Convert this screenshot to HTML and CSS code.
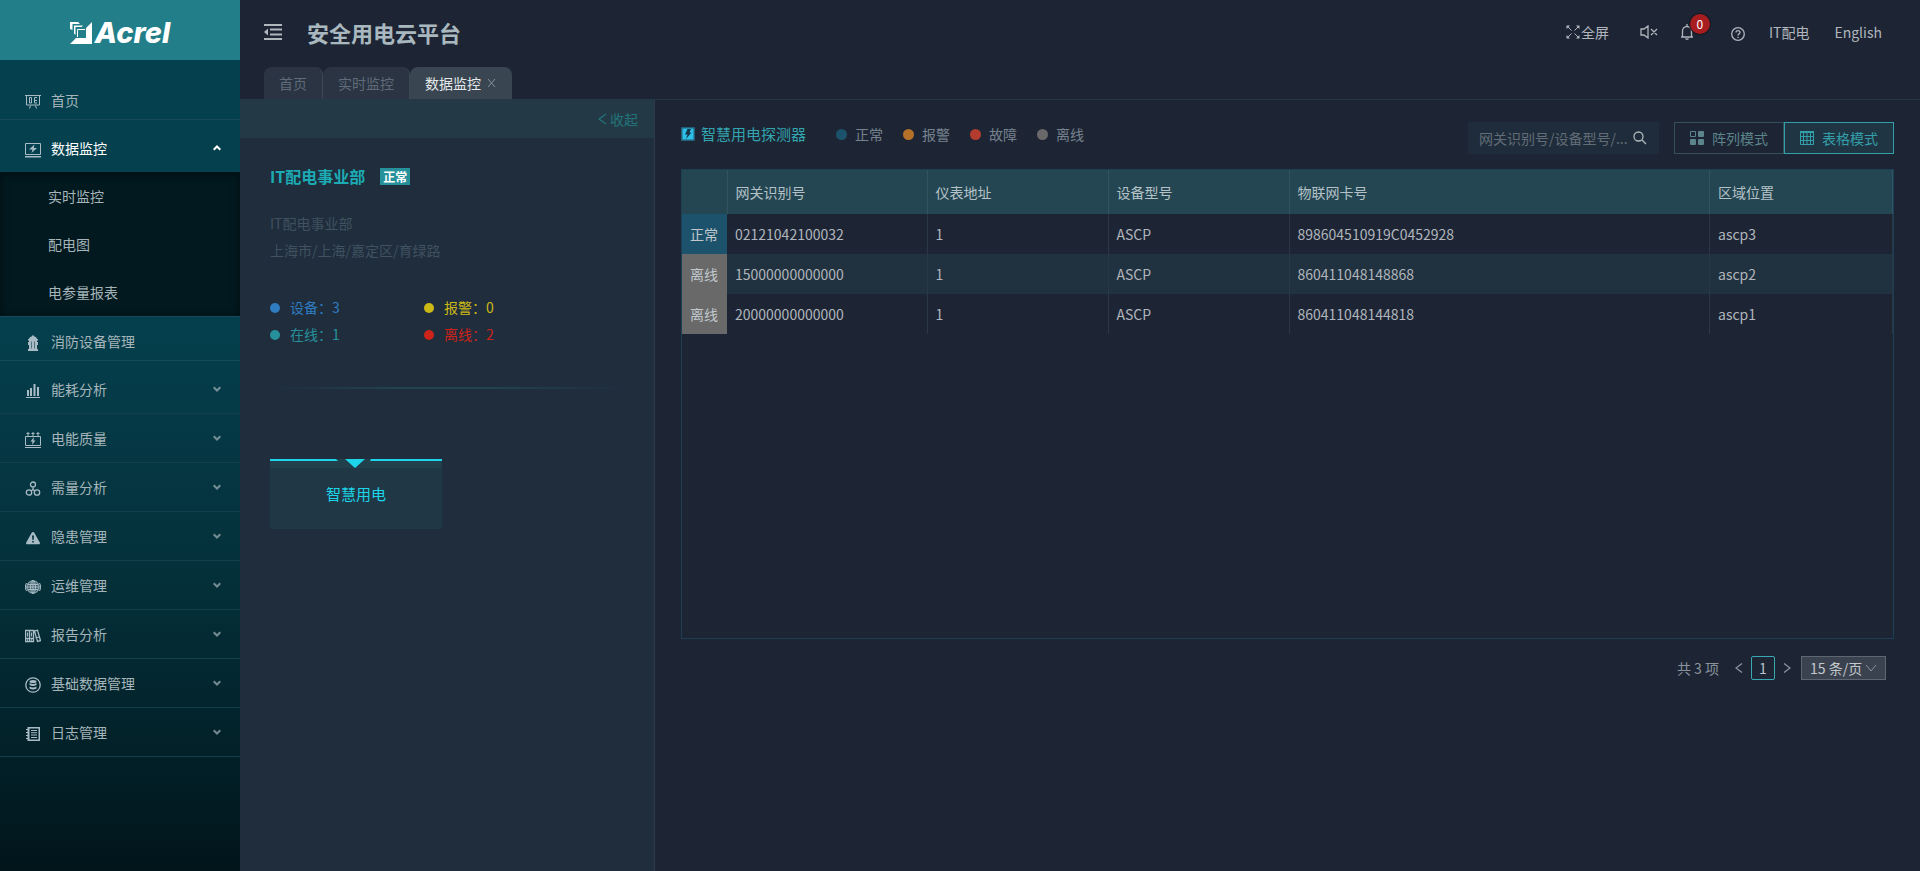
FILE: index.html
```html
<!DOCTYPE html>
<html lang="zh-CN">
<head>
  <meta charset="UTF-8">
  <meta name="viewport" content="width=device-width, initial-scale=1.0">
  <title>安全用电云平台</title>
  <link rel="stylesheet" href="styles.css">
</head>
<body>
  <aside class="sidebar">
    <div class="logo">
      <svg class="logo-mark" viewBox="0 0 22 22" width="22" height="22">
        <path d="M0 0h8l2 2H2.500v6L0 7z"/>
        <path d="M4 3.500h9L11.500 5H5.500v8L4 11.500z"/>
        <path d="M22 0v22H0l6-6h10V6z"/>
        <path class="line" d="M7.500 15V7.500H15"/>
      </svg>
      <span class="logo-text">Acrel</span>
    </div>

    <ul class="menu">
      <li>
        <a href="#" class="menu-item">
          <svg class="icon" viewBox="0 0 16 16"><path class="line" d="M0 1.500h16M1.500 1.500v9.500h13v-9.500M4.500 3.500h2v5.500h-2zM12 3.500H9.500v5.500H12M9.500 6.500H12M5.500 11.500l-1 3M10.500 11.500l1 3"/></svg>
          <span>首页</span>
        </a>
      </li>
      <li>
        <button class="menu-title open">
          <svg class="icon" viewBox="0 0 16 16"><path class="line" d="M.5 1.500h15v11H.5z"/><path d="M9.500 2.500L4 7.500h3.500L6.500 11 12 6H8.800zM0 14h16v1.500H0z"/></svg>
          <span>数据监控</span>
          <svg class="arrow" viewBox="0 0 8 6"><path d="M.7 4.700L4 1.500l3.300 3.200"/></svg>
        </button>
        <ul class="submenu">
          <li><a href="#">实时监控</a></li>
          <li><a href="#">配电图</a></li>
          <li><a href="#">电参量报表</a></li>
        </ul>
      </li>
      <li>
        <a href="#" class="menu-item">
          <svg class="icon" viewBox="0 0 16 16"><path d="M8 0l1.500 1.500C11 2 12 3 12 4h1v1.500h-1V7h1v3h-1v4h1v2H3v-2h1v-4H3V7h1V5.500H3V4h1c0-1 1-2 2.500-2.500z"/><path class="dark" d="M6.500 6.500v7M9.500 6.500v7"/></svg>
          <span>消防设备管理</span>
        </a>
      </li>
      <li>
        <button class="menu-title">
          <svg class="icon" viewBox="0 0 16 16"><path d="M1 14h14v1H1zM2 7h2v6H2zM5 5h2v8H5zM8.500 1h2v12h-2zM12 4h2v9h-2z"/></svg>
          <span>能耗分析</span>
          <svg class="arrow" viewBox="0 0 8 6"><path d="M.7 1.300L4 4.500l3.300-3.200"/></svg>
        </button>
      </li>
      <li>
        <button class="menu-title">
          <svg class="icon" viewBox="0 0 16 16"><path class="line" d="M.5 4.500h15v9H.5zM3 0v4M8 0v4M13 0v4M0 15.500h16"/><path d="M1.500 1h3v1h-3zM6.500 1h3v1h-3zM11.500 1h3v1h-3zM9 5L5.500 9.500h2L7 13l3.500-4.500h-2z"/></svg>
          <span>电能质量</span>
          <svg class="arrow" viewBox="0 0 8 6"><path d="M.7 1.300L4 4.500l3.300-3.200"/></svg>
        </button>
      </li>
      <li>
        <button class="menu-title">
          <svg class="icon" viewBox="0 0 16 16"><g class="line bold"><circle cx="8" cy="3.500" r="2.500"/><circle cx="4" cy="11.500" r="2.700"/><circle cx="12" cy="11.500" r="2.700"/><path d="M8 6.500v2L6 10M8 8.500l2 1.500"/></g></svg>
          <span>需量分析</span>
          <svg class="arrow" viewBox="0 0 8 6"><path d="M.7 1.300L4 4.500l3.300-3.200"/></svg>
        </button>
      </li>
      <li>
        <button class="menu-title">
          <svg class="icon" viewBox="0 0 16 16"><path fill-rule="evenodd" d="M8 2c.6 0 1 .3 1.300.8l5.500 9.700c.5 1-.1 1.800-1 1.800H2.200c-.9 0-1.500-.8-1-1.800l5.500-9.700C7 2.300 7.400 2 8 2zM7 5.500l.4 4.500h1.200L9 5.500zM7.200 11v1.500h1.600V11z"/></svg>
          <span>隐患管理</span>
          <svg class="arrow" viewBox="0 0 8 6"><path d="M.7 1.300L4 4.500l3.300-3.200"/></svg>
        </button>
      </li>
      <li>
        <button class="menu-title">
          <svg class="icon" viewBox="0 0 16 16"><circle cx="8" cy="8" r="6.500" opacity=".35"/><g class="line"><circle cx="8" cy="8" r="6.200"/><ellipse cx="8" cy="8" rx="2.500" ry="6.200"/><path d="M8 1v14M3 5.500h10M2 8h12M3 10.500h10M1.500 4C0 6.500 0 9.500 1.500 12M14.500 4c1.500 2.500 1.500 5.500 0 8"/></g></svg>
          <span>运维管理</span>
          <svg class="arrow" viewBox="0 0 8 6"><path d="M.7 1.300L4 4.500l3.300-3.200"/></svg>
        </button>
      </li>
      <li>
        <button class="menu-title">
          <svg class="icon" viewBox="0 0 16 16"><g class="line bold"><path d="M.5 2.500h4v11h-4zM4.500 2.500h4v11h-4zM9.500 3l3-.8 3 10.500-3 .8zM.5 10.500h8M10.500 10l3.500-1"/><path d="M2.500 4.500v4M6.500 4.500v4M2 12h1M6 12h1"/></g></svg>
          <span>报告分析</span>
          <svg class="arrow" viewBox="0 0 8 6"><path d="M.7 1.300L4 4.500l3.300-3.200"/></svg>
        </button>
      </li>
      <li>
        <button class="menu-title">
          <svg class="icon" viewBox="0 0 16 16"><circle class="line bold" cx="8" cy="8" r="7.200"/><ellipse cx="8" cy="4.500" rx="3.500" ry="1.500"/><path d="M4.500 6c2 1.300 5 1.300 7 0v2c-2 1.300-5 1.300-7 0zM4.500 9.500c2 1.300 5 1.300 7 0v2c-2 1.300-5 1.300-7 0z"/></svg>
          <span>基础数据管理</span>
          <svg class="arrow" viewBox="0 0 8 6"><path d="M.7 1.300L4 4.500l3.300-3.200"/></svg>
        </button>
      </li>
      <li>
        <button class="menu-title">
          <svg class="icon" viewBox="0 0 16 16"><path fill-rule="evenodd" d="M2.500 1H15v14H2.500zM4.500 2.500v11h9v-11z"/><path d="M6 4h6v1H6zM6 6.300h6v1H6zM6 8.600h6v1H6zM6 11h6v1H6zM1 3h3v1H1zM1 6h3v1H1zM1 9h3v1H1zM1 12h3v1H1z"/></svg>
          <span>日志管理</span>
          <svg class="arrow" viewBox="0 0 8 6"><path d="M.7 1.300L4 4.500l3.300-3.200"/></svg>
        </button>
      </li>
    </ul>
  </aside>

  <div class="layout">
    <header class="header">
      <button class="fold" aria-label="收起菜单">
        <svg viewBox="0 0 18 16" width="18" height="16"><path class="line" d="M0 1h18M6 5.500h12M6 10.500h12M0 15h18"/><path d="M4 4.500v7L0 8z"/></svg>
      </button>
      <h1>安全用电云平台</h1>
      <nav class="tools">
        <a href="#" class="tool-full">
          <svg viewBox="0 0 14 14" width="14" height="14"><path class="line" d="M2 2l3.500 3.500M12 2L8.500 5.500M2 12l3.500-3.500M12 12L8.500 8.500"/><path d="M.5.500H4L.5 4zM13.500.500V4L10 .500zM.5 13.500V10L4 13.500zM13.500 13.500H10l3.500-3.500z"/></svg>
          <span>全屏</span>
        </a>
        <button class="tool-mute" aria-label="静音">
          <svg viewBox="0 0 18 14" width="18" height="14"><path class="line bold" d="M1 4h3l4-3v12L4 10H1zM11 4l6 6M17 4l-6 6"/></svg>
        </button>
        <button class="tool-bell" aria-label="消息">
          <svg viewBox="0 0 14 16" width="14" height="16"><path class="line bold" d="M1 13h12M2.500 13V7C2.500 4.500 4.500 2.500 7 2.500S11.500 4.500 11.500 7v6M7 0v2.500M5.500 14.500c.5 1 2.500 1 3 0"/></svg>
          <span class="count">0</span>
        </button>
        <button class="tool-help" aria-label="帮助">
          <svg viewBox="0 0 14 14" width="14" height="14"><g class="line bold"><circle cx="7" cy="7" r="6.300"/><path d="M5 5.500C5 3 9 3 9 5.500 9 7 7 6.800 7 8.500M7 9.800V11"/></g></svg>
        </button>
        <a href="#" class="tool-user">IT配电</a>
        <a href="#">English</a>
      </nav>
    </header>

    <nav class="tabs">
      <a href="#">首页</a>
      <a href="#">实时监控</a>
      <a href="#" class="active">数据监控
        <svg viewBox="0 0 10 10" width="10" height="10"><path class="line" d="M1 1l7 8M8 1L1 9"/></svg>
      </a>
    </nav>

    <div class="body">
      <section class="panel">
        <div class="panel-bar">
          <button class="collapse">
            <svg viewBox="0 0 9 12" width="9" height="12"><path class="line bold" d="M8 1L1 6l7 5"/></svg>
            <span>收起</span>
          </button>
        </div>
        <div class="project">
          <h2>IT配电事业部 <span class="tag">正常</span></h2>
          <p class="info">IT配电事业部</p>
          <p class="info">上海市/上海/嘉定区/育绿路</p>
          <ul class="stats">
            <li class="blue">设备：3</li>
            <li class="yellow">报警：0</li>
            <li class="teal">在线：1</li>
            <li class="red">离线：2</li>
          </ul>
          <hr class="divider">
          <button class="card">
            <svg class="card-top" viewBox="0 0 172 9" width="172" height="9"><path d="M0 0h66l2 2H0zM101 0h71v2h-72zM75 0h20L85 9z"/></svg>
            <span>智慧用电</span>
          </button>
        </div>
      </section>

      <main class="content">
        <div class="toolbar">
          <h3>
            <svg viewBox="0 0 14 14" width="14" height="14"><rect width="14" height="14" rx="1" fill="#235f78"/><rect x="1.500" y="1.500" width="11" height="11" fill="#2cc0e8"/><path fill="#17364a" d="M6.500 2H10L8.500 5.500h2L5 12l1.500-4.500H4z"/></svg>
            智慧用电探测器
          </h3>
          <ul class="legend">
            <li class="normal">正常</li>
            <li class="alarm">报警</li>
            <li class="fault">故障</li>
            <li class="offline">离线</li>
          </ul>
          <div class="search">
            <input type="text" placeholder="网关识别号/设备型号/..." aria-label="搜索">
            <button aria-label="查询">
              <svg viewBox="0 0 14 14" width="14" height="14"><path class="line bold" d="M10 5.500a4.500 4.500 0 1 1-9 0 4.500 4.500 0 0 1 9 0zM9 9l4 4"/></svg>
            </button>
          </div>
          <div class="modes">
            <button>
              <svg viewBox="0 0 14 14" width="14" height="14"><path class="line" d="M.5.500h5v5h-5z"/><rect x="8" width="6" height="6" rx="1"/><rect y="8" width="6" height="6" rx="1"/><rect x="8" y="8" width="6" height="6" rx="1"/></svg>
              阵列模式
            </button>
            <button class="active">
              <svg viewBox="0 0 14 14" width="14" height="14"><path d="M0 0h14v2H0z"/><path class="line" d="M.5 1v12.500h13V1M0 5.500h14M0 9.500h14M3.500 1v13M7 1v13M10.500 1v13"/></svg>
              表格模式
            </button>
          </div>
        </div>

        <div class="table-box">
          <table>
            <colgroup>
              <col class="c-status"><col class="c-gateway"><col class="c-short"><col class="c-short"><col><col class="c-area">
            </colgroup>
            <thead>
              <tr><th></th><th>网关识别号</th><th>仪表地址</th><th>设备型号</th><th>物联网卡号</th><th>区域位置</th></tr>
            </thead>
            <tbody>
              <tr><td class="normal">正常</td><td>02121042100032</td><td>1</td><td>ASCP</td><td>898604510919C0452928</td><td>ascp3</td></tr>
              <tr><td class="offline">离线</td><td>15000000000000</td><td>1</td><td>ASCP</td><td>860411048148868</td><td>ascp2</td></tr>
              <tr><td class="offline">离线</td><td>20000000000000</td><td>1</td><td>ASCP</td><td>860411048144818</td><td>ascp1</td></tr>
            </tbody>
          </table>
        </div>

        <div class="pagination">
          <span class="total">共 3 项</span>
          <button class="step" aria-label="上一页"><svg viewBox="0 0 8 10" width="8" height="10"><path class="line bold" d="M7 .500L1 5l6 4.500"/></svg></button>
          <button class="page">1</button>
          <button class="step" aria-label="下一页"><svg viewBox="0 0 8 10" width="8" height="10"><path class="line bold" d="M1 .500L7 5 1 9.500"/></svg></button>
          <div class="size">
            <select aria-label="每页条数">
              <option>15 条/页</option>
              <option>30 条/页</option>
            </select>
            <svg viewBox="0 0 10 8" width="10" height="8"><path class="line" d="M0 1l5 6 5-6"/></svg>
          </div>
        </div>
      </main>
    </div>
  </div>
</body>
</html>
```
FILE: styles.css
```css
* {
  box-sizing: border-box;
  margin: 0;
  padding: 0;
}

body {
  display: flex;
  min-height: 100vh;
  background: #1d2535;
  color: #b0b6bc;
  font-family: "Noto Sans CJK SC", sans-serif;
  font-size: 14px;
  line-height: 22px;
}

ul {
  list-style: none;
}

a {
  color: inherit;
  text-decoration: none;
}

button,
input,
select {
  font: inherit;
  color: inherit;
  background: none;
  border: none;
  border-radius: 0;
  outline: none;
}

button {
  cursor: pointer;
}

svg {
  display: block;
  flex: none;
  fill: currentColor;
}

.line {
  fill: none;
  stroke: currentColor;
  stroke-width: 1;
}

.line.bold {
  stroke-width: 1.3;
}

/* sidebar */
.sidebar {
  flex: none;
  width: 240px;
  background: linear-gradient(#05404e 0, #05404e 35%, #042f39 68%, #01151b 100%);
}

.logo {
  display: flex;
  align-items: center;
  justify-content: center;
  gap: 3px;
  height: 60px;
  margin-bottom: 20px;
  padding-top: 5px;
  background: #227e88;
  color: #fff;
}

.logo-text {
  font: italic 800 29px/28px Inter, sans-serif;
}

.menu {
  color: #a5b5ba;
}

.menu-item,
.menu-title {
  display: flex;
  align-items: center;
  gap: 10px;
  width: 100%;
  height: 40px;
  padding: 0 19px 0 25px;
  border-bottom: 1px solid #154a56;
  text-align: left;
}

.menu-item {
  margin-bottom: 4px;
}

.menu-title {
  height: 49px;
  border-color: #123f49;
}

.menu-title.open {
  height: 48px;
  border-bottom: none;
  color: #fff;
}

.icon {
  width: 16px;
  height: 16px;
  margin-top: 4px;
  color: #a9bcc5;
}

.icon .dark {
  fill: none;
  stroke: #4c7480;
}

.arrow {
  width: 8px;
  height: 6px;
  margin-left: auto;
  fill: none;
  stroke: currentColor;
  stroke-width: 2;
  opacity: 0.7;
}

.open .arrow {
  opacity: 1;
}

.submenu {
  margin-bottom: 4px;
  border-bottom: 1px solid #154a56;
  background: #02191f;
  box-shadow: inset 0 2px 8px rgba(0, 0, 0, 0.45);
}

.submenu a {
  display: block;
  padding-left: 48px;
  line-height: 48px;
}

/* header */
.layout {
  display: flex;
  flex: 1;
  flex-direction: column;
  min-width: 0;
}

.header {
  display: flex;
  align-items: center;
  height: 64px;
  padding: 0 38px 0 24px;
}

.fold {
  margin-right: 25px;
}

.fold .line {
  stroke-width: 2;
}

.header h1 {
  color: #a9b8be;
  font-size: 22px;
  line-height: 32px;
}

.tools {
  display: flex;
  align-items: center;
  margin-left: auto;
}

.tool-full {
  display: flex;
  align-items: center;
  gap: 1px;
}

.tool-mute {
  margin-left: 31px;
}

.tool-bell {
  position: relative;
  margin-left: 22px;
}

.count {
  position: absolute;
  top: -10px;
  left: 10px;
  width: 20px;
  border-radius: 50%;
  box-shadow: 0 0 0 1px #131924;
  background: #a81e20;
  color: #fff;
  font-size: 12px;
  line-height: 20px;
  text-align: center;
}

.tool-help {
  margin: 4px 24px 0 37px;
}

.tool-user {
  margin-right: 25px;
}

.tabs {
  display: flex;
  height: 35px;
  padding: 3px 0 0 24px;
}

.tabs a {
  display: flex;
  align-items: center;
  gap: 6px;
  padding: 0 15px;
  border-right: 1px solid #3c4855;
  border-radius: 8px 8px 0 0;
  background: #2a3442;
  color: #5f6b78;
}

.tabs .active {
  border: none;
  background: #394651;
  color: #e4e8ea;
}

.tabs svg {
  color: #87929a;
}

.body {
  display: flex;
  flex: 1;
  border-top: 1px solid #263845;
}

/* project panel */
.panel {
  flex: none;
  width: 415px;
  border-right: 1px solid #2c3a4a;
  background: #1f2d3d;
}

.panel-bar {
  display: flex;
  align-items: center;
  justify-content: flex-end;
  height: 38px;
  padding-right: 16px;
  background: #233a46;
}

.collapse {
  display: flex;
  align-items: center;
  gap: 3px;
  color: #22747a;
}

.project {
  padding: 26px 30px;
}

.project h2 {
  display: flex;
  align-items: center;
  gap: 15px;
  margin-bottom: 22px;
  color: #1caab3;
  font-size: 16px;
  line-height: 24px;
}

.tag {
  padding: 0 3px;
  background: #27919b;
  color: #fff;
  font-size: 12px;
  line-height: 17px;
}

.info {
  color: #40515f;
  line-height: 27px;
}

.stats {
  display: grid;
  grid-template-columns: 154px 1fr;
  margin-top: 30px;
  line-height: 27px;
}

.stats li,
.legend li {
  display: flex;
  align-items: center;
  gap: 10px;
}

.stats li::before {
  content: "";
  width: 10px;
  height: 10px;
  border-radius: 50%;
  background: currentColor;
}

.blue { color: #2f7cc0; }
.yellow { color: #cdb916; }
.teal { color: #27919b; }
.red { color: #cc2419; }

.divider {
  height: 2px;
  margin: 39px 0 70px;
  border: none;
  background: linear-gradient(90deg, transparent, #21434d 35%, #21434d 65%, transparent);
}

.card {
  position: relative;
  width: 172px;
  height: 70px;
  border-radius: 2px;
  background: #203746;
  color: #1cd5e8;
  font-size: 15px;
}

.card-top {
  position: absolute;
  top: 0;
  left: 0;
  background: #223f4c;
}

/* main content */
.content {
  flex: 1;
  min-width: 0;
  padding: 22px 26px;
}

.toolbar {
  display: flex;
  height: 32px;
  margin-bottom: 15px;
}

.toolbar h3 {
  display: flex;
  align-items: center;
  gap: 6px;
  height: 24px;
  color: #33a5b0;
  font-size: 15px;
  font-weight: normal;
}

.legend {
  display: flex;
  gap: 20px;
  height: 24px;
  margin-left: 30px;
  color: #76828e;
}

.legend li {
  gap: 8px;
}

.legend li::before {
  content: "";
  width: 11px;
  height: 11px;
  border-radius: 50%;
}

.normal::before { background: #1d526c; }
.alarm::before { background: #b57129; }
.fault::before { background: #b33c2f; }
.offline::before { background: #696969; }

.search {
  display: flex;
  align-items: center;
  width: 191px;
  margin-left: auto;
  padding: 0 12px 0 11px;
  background: #1f2c3b;
}

.search input {
  flex: 1;
  min-width: 0;
}

.search input::placeholder {
  color: #626c76;
}

.modes {
  display: flex;
  margin-left: 15px;
}

.modes button {
  display: flex;
  align-items: center;
  justify-content: center;
  gap: 8px;
  width: 110px;
  border: 1px solid #35505b;
  color: #5c848b;
}

.modes .active {
  border-color: #339fa8;
  background: #203543;
  color: #339fa8;
}

.table-box {
  min-height: 470px;
  border: 1px solid #1b4055;
}

table {
  width: 100%;
  border-collapse: collapse;
  table-layout: fixed;
}

.c-status { width: 45px; }
.c-gateway { width: 200px; }
.c-short { width: 181px; }
.c-area { width: 183px; }

th,
td {
  height: 40px;
  padding: 0 8px;
  border-right: 1px solid #2a3845;
  font-weight: normal;
  text-align: left;
}

th {
  height: 44px;
  border-color: #305560;
  background: #244652;
  color: #b4c2c7;
}

tbody tr:nth-child(even) {
  background: #20313f;
}

td.normal,
td.offline {
  border: none;
  color: #c0c8cc;
}

td.normal::before,
td.offline::before {
  content: none;
}

td.normal { background: #1d526c; }
td.offline { background: #696969; }

.pagination {
  display: flex;
  align-items: center;
  justify-content: flex-end;
  height: 24px;
  margin: 17px 8px 0 0;
  color: #8a929c;
}

.total {
  margin-right: 8px;
}

.step {
  display: flex;
  align-items: center;
  justify-content: center;
  width: 24px;
  height: 24px;
}

.page {
  width: 24px;
  height: 24px;
  border: 1px solid #38a9b3;
  border-radius: 2px;
  color: #b9c3c8;
}

.size {
  position: relative;
  margin-left: 2px;
}

.size select {
  width: 85px;
  height: 24px;
  padding: 0 8px;
  border: 1px solid #5d6671;
  background: #3a424f;
  color: #c4c8cc;
  line-height: 20px;
  appearance: none;
}

.size svg {
  position: absolute;
  top: 8px;
  right: 10px;
  pointer-events: none;
}
```
